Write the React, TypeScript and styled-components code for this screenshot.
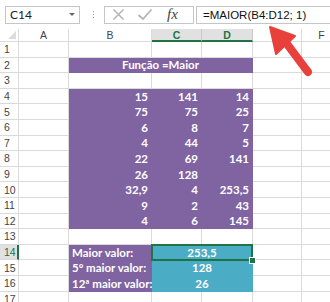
import React from "react";
import styled, { createGlobalStyle, css } from "styled-components";

const GlobalStyle = createGlobalStyle`
  html, body {
    margin: 0;
    padding: 0;
    background: #ffffff;
  }
`;

const PURPLE = "#8064a2";
const TEAL = "#4bacc6";
const GREEN = "#217346";
const GRID = "#dadada";

const Frame = styled.div`
  position: relative;
  width: 330px;
  height: 302px;
  overflow: hidden;
  background: #ffffff;
  font-family: Lato, "Open Sans", sans-serif;
`;

const FormulaBar = styled.div`
  display: flex;
  align-items: center;
  height: 29px;
  padding: 0 0 0 5px;
  box-sizing: border-box;
`;

const NameBox = styled.div`
  display: flex;
  align-items: center;
  justify-content: space-between;
  width: 75px;
  height: 18px;
  box-sizing: border-box;
  border: 1px solid #c6c6c6;
  padding: 0 4px 0 4px;
  font-size: 12px;
  color: #222;
`;

const DropArrow = styled.span`
  width: 0;
  height: 0;
  border-left: 3px solid transparent;
  border-right: 3px solid transparent;
  border-top: 3px solid #666;
`;

const Dots = styled.div`
  display: flex;
  flex-direction: column;
  gap: 2px;
  margin: 0 10px 0 13px;
  span {
    width: 1px;
    height: 1px;
    background: #999;
  }
`;

const ButtonBox = styled.div`
  display: flex;
  align-items: center;
  height: 18px;
  width: 90px;
  box-sizing: border-box;
  border: 1px solid #c6c6c6;
  padding: 0 0 0 7px;
  margin-right: 2px;
`;

const IconSlot = styled.span`
  display: flex;
  margin-right: 12px;
`;

const FxLabel = styled.span`
  margin-left: 2px;
  font-family: "Liberation Serif", serif;
  font-style: italic;
  font-size: 15px;
  color: #444;
`;

const FormulaInput = styled.div`
  flex: 1;
  height: 18px;
  box-sizing: border-box;
  border: 1px solid #c6c6c6;
  border-right: none;
  padding: 0 0 0 6px;
  display: flex;
  align-items: center;
  font-family: "Liberation Sans", Arial, sans-serif;
  font-size: 11.5px;
  color: #111;
`;

const Sheet = styled.div`
  position: relative;
  display: grid;
  grid-template-columns: 19px 50px 83px 50px 51px 49px 40px;
  grid-template-rows: 13px repeat(17, 15.6px);
`;

const Corner = styled.div`
  position: relative;
  border-right: 1px solid ${GRID};
  border-bottom: 1px solid ${GRID};
  box-sizing: border-box;
  &::after {
    content: "";
    position: absolute;
    right: 2px;
    bottom: 2px;
    border-left: 8px solid transparent;
    border-bottom: 8px solid #dcdcdc;
  }
`;

const ColHead = styled.div<{ $active?: boolean }>`
  display: flex;
  align-items: center;
  justify-content: center;
  box-sizing: border-box;
  border-right: 1px solid ${GRID};
  border-bottom: 1px solid ${GRID};
  font-family: "Liberation Sans", Arial, sans-serif;
  font-size: 10.5px;
  color: #444;
  ${(p) =>
    p.$active &&
    css`
      background: #e1e1e1;
      color: ${GREEN};
      font-weight: bold;
      border-bottom: 2px solid ${GREEN};
      border-right-color: #c8c8c8;
    `}
`;

const RowHead = styled.div<{ $active?: boolean }>`
  display: flex;
  align-items: center;
  justify-content: flex-start;
  padding-left: 4px;
  box-sizing: border-box;
  border-right: 1px solid ${GRID};
  border-bottom: 1px solid ${GRID};
  font-family: "Liberation Sans", Arial, sans-serif;
  font-size: 10.5px;
  color: #444;
  ${(p) =>
    p.$active &&
    css`
      background: #e1e1e1;
      color: ${GREEN};
      border-right: 2px solid ${GREEN};
    `}
`;

const Cell = styled.div<{
  $fill?: string;
  $align?: "left" | "right" | "center";
  $span?: number;
}>`
  display: flex;
  align-items: center;
  justify-content: ${(p) =>
    p.$align === "right" ? "flex-end" : p.$align === "center" ? "center" : "flex-start"};
  grid-column: span ${(p) => p.$span ?? 1};
  padding: 0 3px;
  box-sizing: border-box;
  background: ${(p) => p.$fill ?? "#ffffff"};
  border-right: 1px solid ${(p) => p.$fill ?? GRID};
  border-bottom: 1px solid ${(p) => p.$fill ?? GRID};
  color: #ffffff;
  font-weight: bold;
  font-size: 11.5px;
  white-space: nowrap;
`;

const Selection = styled.div`
  position: absolute;
  left: 151px;
  top: 215.2px;
  width: 102px;
  height: 17px;
  box-sizing: border-box;
  border: 2px solid ${GREEN};
  pointer-events: none;
  &::after {
    content: "";
    position: absolute;
    right: -5px;
    bottom: -5px;
    width: 5px;
    height: 5px;
    background: ${GREEN};
    border: 1px solid #fff;
  }
`;

const Arrow = styled.svg`
  position: absolute;
  left: 262px;
  top: 20px;
  z-index: 5;
`;

const XIcon = () => (
  <svg width="13" height="13" viewBox="0 0 13 13">
    <path d="M1.5 1.5 L11.5 11.5 M11.5 1.5 L1.5 11.5" stroke="#b4b4b4" strokeWidth="1.5" fill="none" />
  </svg>
);

const CheckIcon = () => (
  <svg width="16" height="13" viewBox="0 0 16 13">
    <path d="M1.5 7 L6 11 L14.5 1.5" stroke="#b4b4b4" strokeWidth="1.8" fill="none" />
  </svg>
);

type Row = { n: number; cells: React.ReactNode };

const blank = (k: string) => <Cell key={k} />;

const numRow = (n: number, b: string, c: string, d: string): Row => ({
  n,
  cells: [
    blank("a"),
    <Cell key="b" $fill={PURPLE} $align="right">{b}</Cell>,
    <Cell key="c" $fill={PURPLE} $align="right">{c}</Cell>,
    <Cell key="d" $fill={PURPLE} $align="right">{d}</Cell>,
    blank("e"),
    blank("f"),
  ],
});

const labelRow = (n: number, label: string, value: string): Row => ({
  n,
  cells: [
    blank("a"),
    <Cell key="b" $fill={PURPLE}>{label}</Cell>,
    <Cell key="cd" $fill={TEAL} $align="center" $span={2}>{value}</Cell>,
    blank("e"),
    blank("f"),
  ],
});

const emptyRow = (n: number): Row => ({
  n,
  cells: ["a", "b", "c", "d", "e", "f"].map(blank),
});

const rows: Row[] = [
  emptyRow(1),
  {
    n: 2,
    cells: [
      blank("a"),
      <Cell key="bd" $fill={PURPLE} $align="center" $span={3}>Função =Maior</Cell>,
      blank("e"),
      blank("f"),
    ],
  },
  emptyRow(3),
  numRow(4, "15", "141", "14"),
  numRow(5, "75", "75", "25"),
  numRow(6, "6", "8", "7"),
  numRow(7, "4", "44", "5"),
  numRow(8, "22", "69", "141"),
  numRow(9, "26", "128", ""),
  numRow(10, "32,9", "4", "253,5"),
  numRow(11, "9", "2", "43"),
  numRow(12, "4", "6", "145"),
  emptyRow(13),
  labelRow(14, "Maior valor:", "253,5"),
  labelRow(15, "5º maior valor:", "128"),
  labelRow(16, "12ª maior valor:", "26"),
  emptyRow(17),
];

export default function App() {
  return (
    <Frame>
      <GlobalStyle />
      <FormulaBar>
        <NameBox>
          C14
          <DropArrow />
        </NameBox>
        <Dots>
          <span />
          <span />
          <span />
        </Dots>
        <ButtonBox>
          <IconSlot>
            <XIcon />
          </IconSlot>
          <IconSlot>
            <CheckIcon />
          </IconSlot>
          <FxLabel>fx</FxLabel>
        </ButtonBox>
        <FormulaInput>=MAIOR(B4:D12; 1)</FormulaInput>
      </FormulaBar>
      <Sheet>
        <Corner />
        <ColHead>A</ColHead>
        <ColHead>B</ColHead>
        <ColHead $active>C</ColHead>
        <ColHead $active>D</ColHead>
        {/* E header sits under the red arrow */}
        <ColHead />
        <ColHead>F</ColHead>
        {rows.map((r) => (
          <React.Fragment key={r.n}>
            <RowHead $active={r.n === 14}>{r.n}</RowHead>
            {r.cells}
          </React.Fragment>
        ))}
        <Selection />
      </Sheet>
      <Arrow width="60" height="60" viewBox="0 0 60 60">
        <path d="M46 52 L22 20" stroke="#e8413b" strokeWidth="8" strokeLinecap="round" />
        <polygon points="8,7 33,16 14,34" fill="#e8413b" stroke="#e8413b" strokeWidth="2" strokeLinejoin="round" />
      </Arrow>
    </Frame>
  );
}
